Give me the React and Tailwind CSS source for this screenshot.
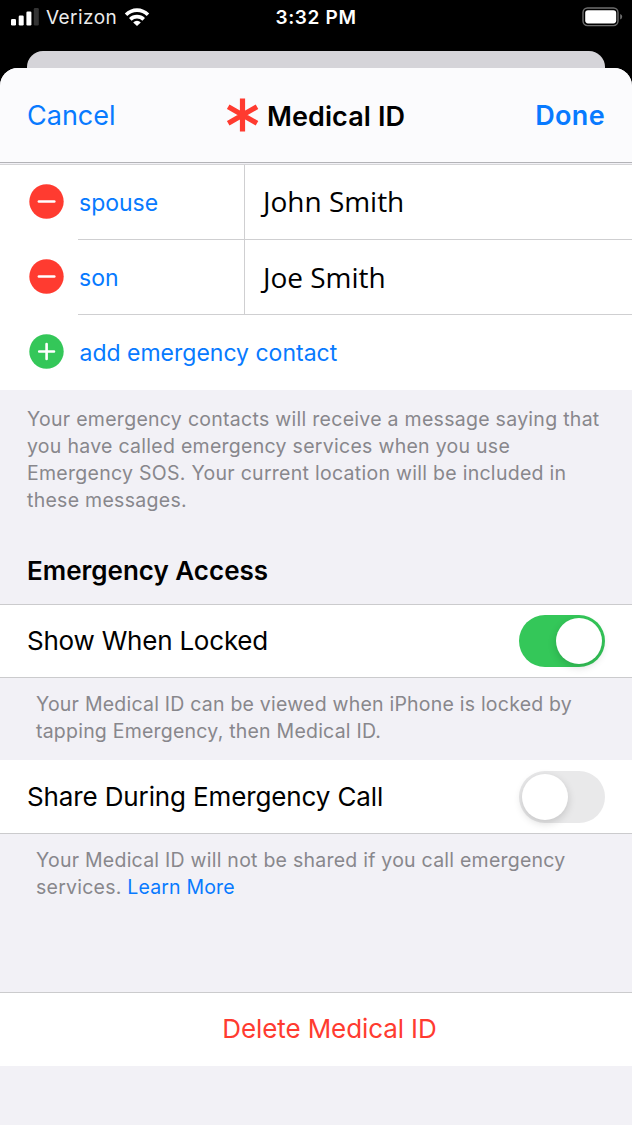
import React from "react";

function StatusBar() {
  return (
    <div className="grid h-[35px] grid-cols-3 items-center text-[19px] text-white">
      <div className="flex items-center pl-[11px]">
        <svg className="mb-[2px] h-[18px] w-[28px]" viewBox="0 0 28 18">
          <rect x="0" y="11" width="5" height="6.5" rx="1.2" fill="#fff" />
          <rect x="7.7" y="7.5" width="5" height="10" rx="1.2" fill="#fff" />
          <rect x="15.4" y="3.5" width="5" height="14" rx="1.2" fill="#fff" />
          <rect x="22.8" y="0" width="5" height="17.5" rx="1.2" fill="#333" />
        </svg>
        <span className="ml-[7px] pt-[2px] tracking-[0.44px] text-[#ececec]">Verizon</span>
        <svg className="mb-[2px] ml-[7px] h-[18px] w-[26px]" viewBox="0 0 26 18">
          <path d="M0.8 5.4a17.2 17.2 0 0 1 24.4 0l-2.5 2.7a13.8 13.8 0 0 0-19.4 0z" fill="#fff" />
          <path d="M5 10a11.3 11.3 0 0 1 16 0l-2.6 2.7a7.7 7.7 0 0 0-10.8 0z" fill="#fff" />
          <path d="M9.2 14.4a5.4 5.4 0 0 1 7.6 0L13 18z" fill="#fff" />
        </svg>
      </div>
      <span className="pt-[2px] text-center font-semibold tracking-[0.65px]">3:32 PM</span>
      <div className="flex justify-end pr-[9px]">
        <svg className="mb-[2px] h-[20px] w-[41px]" viewBox="0 0 41 20">
          <rect x="1" y="1" width="35" height="17.6" rx="4.5" fill="none" stroke="#6e6e6e" strokeWidth="1.4" />
          <rect x="3.2" y="3.2" width="31" height="13.2" rx="2.8" fill="#fff" />
          <path d="M38.2 7v5.6q2-.8 2-2.8t-2-2.8z" fill="#6e6e6e" />
        </svg>
      </div>
    </div>
  );
}

function RoundIcon({ plus }) {
  return (
    <svg className="mb-[2px] ml-[29px] h-[35px] w-[35px] shrink-0" viewBox="0 0 35 35">
      <circle cx="17.5" cy="17.5" r="17.2" fill={plus ? "#34c759" : "#ff3b30"} />
      <path d={plus ? "M10.2 17.5h14.8M17.6 10.1v14.8" : "M9.9 17.5h15.4"} stroke="#fff" strokeWidth="2.6" strokeLinecap="round" />
    </svg>
  );
}

function ContactRow({ relation, name, nameOffset }) {
  return (
    <div className="flex h-[75px]">
      <div className="flex w-[78px] shrink-0 items-center">
        <RoundIcon />
      </div>
      <div className="flex flex-1 border-b border-[#cfcfd1]">
        <div className="flex w-[167px] items-center border-r border-[#cfcfd1] pl-px pt-[3px] text-[23px] text-[#087aff]">{relation}</div>
        <div className={"flex items-center pl-[18px] font-['Open_Sans',sans-serif] text-[28px] leading-[38px] tracking-[-0.02px] " + nameOffset}>{name}</div>
      </div>
    </div>
  );
}

function Toggle({ on }) {
  return (
    <div className={"flex h-[52px] w-[86px] items-center rounded-full px-[3px] " + (on ? "justify-end bg-[#34c759]" : "justify-start bg-[#e9e9ea]")}>
      <div className="h-[46px] w-[46px] rounded-full bg-white shadow-[0_3px_8px_rgba(0,0,0,0.16)]" />
    </div>
  );
}

function SettingRow({ label, on, tracking, className }) {
  return (
    <div className={"flex shrink-0 items-center justify-between border-b border-[#cbcbcd] bg-white px-[27px] " + className}>
      <span className={"text-[26px] leading-[32px] " + tracking}>{label}</span>
      <Toggle on={on} />
    </div>
  );
}

export default function App() {
  return (
    <div className="flex h-[1125px] w-[632px] flex-col overflow-hidden bg-black font-['Inter','Liberation_Sans',sans-serif] text-black">
      <StatusBar />
      <div className="mx-[27px] mt-[16px] h-[17px] shrink-0 rounded-t-[16px] bg-[#d5d4d9]" />
      <main className="flex flex-1 flex-col overflow-hidden rounded-t-[18px] bg-[#f2f1f6]">
        <header className="flex h-[95px] shrink-0 items-center justify-between border-b border-[#b3b3b7] bg-[#fbfbfd] px-[27px]">
          <span className="w-[150px] pt-[2px] text-[27px] text-[#087aff]">Cancel</span>
          <div className="flex items-center">
            <svg className="mr-[8px] h-[34px] w-[32px]" viewBox="0 0 32 34">
              <path d="M15.5 0.5v33M1.2 8.7l28.8 16.6M30 8.7L1.2 25.3" stroke="#ff3b30" strokeWidth="5.2" />
            </svg>
            <h1 className="pt-[4px] text-[27px] font-semibold tracking-[0.1px]">Medical ID</h1>
          </div>
          <span className="w-[150px] pt-[2px] text-right text-[27px] font-semibold tracking-[0.35px] text-[#087aff]">Done</span>
        </header>
        <section className="mt-px h-[226px] shrink-0 border-t border-[#d5d5d7] bg-white">
          <ContactRow relation="spouse" name="John Smith" nameOffset="pb-[3px]" />
          <ContactRow relation="son" name="Joe Smith" nameOffset="pb-px" />
          <div className="flex h-[75px] items-center">
            <RoundIcon plus />
            <span className="ml-[15.5px] pt-px text-[23px] text-[#087aff]">add emergency contact</span>
          </div>
        </section>
        <p className="mt-[16px] pl-[27px] text-[19.5px] leading-[27px] tracking-[0.28px] text-[#88878c]">
          Your emergency contacts will receive a message saying that<br />
          you have called emergency services when you use<br />
          Emergency SOS. Your current location will be included in<br />
          these messages.
        </p>
        <h2 className="mt-[40px] h-[50px] shrink-0 pl-[27px] pt-px text-[26px] font-semibold leading-[32px]">Emergency Access</h2>
        <SettingRow label="Show When Locked" on tracking="tracking-[-0.22px]" className="h-[74px] border-t" />
        <p className="h-[82px] shrink-0 pl-[36px] pt-[13px] text-[19.5px] leading-[27px] tracking-[0.22px] text-[#88878c]">
          Your Medical ID can be viewed when iPhone is locked by<br />
          tapping Emergency, then Medical ID.
        </p>
        <SettingRow label="Share During Emergency Call" tracking="tracking-[-0.13px]" className="h-[74px]" />
        <p className="h-[158px] shrink-0 pl-[36px] pt-[13px] text-[19.5px] leading-[27px] tracking-[0.24px] text-[#88878c]">
          Your Medical ID will not be shared if you call emergency<br />
          services. <span className="tracking-[0.15px] text-[#087aff]">Learn More</span>
        </p>
        <div className="flex h-[74px] shrink-0 items-center justify-center border-t border-[#cbcbcd] bg-white pb-[3px] pl-[27px] text-[26px] tracking-[-0.1px] text-[#ff3b30]">Delete Medical ID</div>
      </main>
    </div>
  );
}
